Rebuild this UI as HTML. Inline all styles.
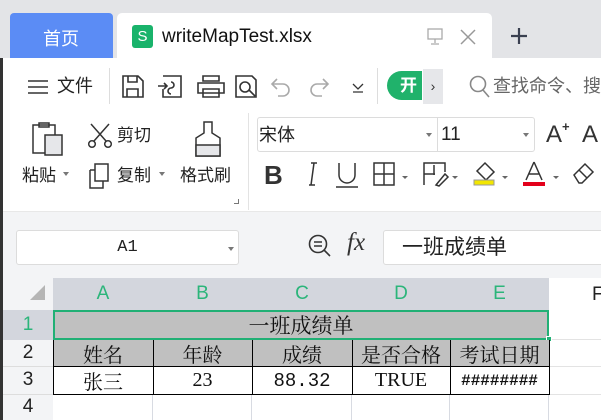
<!DOCTYPE html>
<html><head><meta charset="utf-8"><style>
*{margin:0;padding:0;box-sizing:border-box}
body{width:601px;height:420px;overflow:hidden;position:relative;background:#fff;font-family:"Liberation Sans","Noto Sans CJK SC",sans-serif;color:#222}
.a{position:absolute}
.t{white-space:nowrap;line-height:1}
.cell{position:absolute;display:flex;align-items:center;justify-content:center;font-family:"Liberation Serif","Noto Serif CJK SC","Noto Sans CJK SC",serif;font-size:20px;color:#111;white-space:nowrap}
.ch{position:absolute;top:278px;height:32px;display:flex;align-items:center;justify-content:center;color:#2bb57a;font-size:19px}
.rh{position:absolute;left:3px;width:50px;display:flex;align-items:center;justify-content:center;font-size:19px;color:#222}
.car{position:absolute;border:3px solid transparent;border-top:4px solid #777}
</style></head><body>
<div class="a" style="left:0;top:0;width:601px;height:58px;background:#e3e4e7"></div>
<div class="a" style="left:10px;top:13px;width:103px;height:45px;background:#5b8cf5;border-radius:4px 4px 0 0"></div>
<div class="a t" style="left:43px;top:30px;color:#fff;font-size:18px">首页</div>
<div class="a" style="left:117px;top:13px;width:375px;height:46px;background:#fff;border-radius:5px 5px 0 0"></div>
<div class="a" style="left:132px;top:25px;width:21px;height:23px;background:#19b36b;border-radius:3px;color:#fff;font-size:15px;text-align:center;line-height:23px">S</div>
<div class="a t" style="left:162px;top:27px;font-size:19px;color:#111">writeMapTest.xlsx</div>
<svg class="a" style="left:426px;top:28px" width="20" height="18"><rect x="2" y="1" width="14" height="10" fill="none" stroke="#aaa" stroke-width="1.3"/><path d="M9 11v4M5 16h8" stroke="#aaa" stroke-width="1.3"/></svg>
<svg class="a" style="left:459px;top:28px" width="18" height="18"><path d="M2 2L16 16M16 2L2 16" stroke="#999" stroke-width="1.5"/></svg>
<svg class="a" style="left:509px;top:26px" width="20" height="20"><path d="M10 2v16M2 10h16" stroke="#3a4050" stroke-width="2.2"/></svg>
<div class="a" style="left:0;top:58px;width:3px;height:362px;background:#333"></div>
<!-- row1 toolbar -->
<svg class="a" style="left:27px;top:79px" width="22" height="16"><path d="M1 2h20M1 8h20M1 14h20" stroke="#333" stroke-width="1.4"/></svg>
<div class="a t" style="left:57px;top:77px;font-size:18px">文件</div>
<div class="a" style="left:109px;top:68px;width:1px;height:36px;background:#ddd"></div>
<svg class="a" style="left:120px;top:73px" width="250" height="28" fill="none" stroke="#333" stroke-width="1.6">
<path d="M3 3h15l5 5v16H3z M8 3v6h9V3 M7 24v-8h11v8"/>
<path d="M43 3h18v21H43v-8 M38 13h9 M44 10l3 3-3 3 M51 9a3 3 0 1 1 0 6a3 3 0 1 0 0 6"/>
<path d="M83 8h16v-5H83z M78 10h26v10H78z M83 16h16v8H83z"/>
<path d="M116 3h16l4 4v17h-20z M125 9a5 5 0 1 1 0 10a5 5 0 1 1 0-10 M129 17l6 6"/>
<path d="M157 6l-5 5 5 5 M152 11h11a6 6 0 0 1 0 12h-5" stroke="#aaa"/>
<path d="M203 6l5 5-5 5 M208 11h-11a6 6 0 0 0 0 12h5" stroke="#aaa"/>
<path d="M233 11l5 5 5-5 M233 19h10" stroke-width="1.3"/>
</svg>
<div class="a" style="left:377px;top:68px;width:1px;height:36px;background:#ddd"></div>
<div class="a" style="left:387px;top:71px;width:35px;height:29px;background:#20b26b;border-radius:15px 0 0 15px;color:#fff;font-weight:bold;font-size:17px;line-height:29px;padding-left:13px">开</div>
<div class="a" style="left:423px;top:69px;width:20px;height:35px;background:#e6e7ea;font-size:14px;text-align:center;line-height:34px;color:#333">›</div>
<svg class="a" style="left:469px;top:75px" width="22" height="24"><circle cx="9" cy="9" r="7.5" fill="none" stroke="#888" stroke-width="1.6"/><path d="M14 15l6 7" stroke="#888" stroke-width="1.6"/></svg>
<div class="a t" style="left:493px;top:77px;font-size:18px;color:#666">查找命令、搜</div>
<!-- clipboard group -->
<svg class="a" style="left:31px;top:121px" width="34" height="36" fill="none" stroke="#333" stroke-width="1.5"><path d="M2 4h22v28H2z M8 2h10v4H8z"/><rect x="14" y="14" width="17" height="20" fill="#e6e7ea"/></svg>
<div class="a t" style="left:22px;top:167px;font-size:17px">粘贴</div><div class="car" style="left:63px;top:172px"></div>
<svg class="a" style="left:87px;top:122px" width="26" height="28" fill="none" stroke="#333" stroke-width="1.5"><path d="M4 2l15 17M22 2L7 19"/><circle cx="5" cy="22" r="3.3"/><circle cx="21" cy="22" r="3.3"/></svg>
<div class="a t" style="left:117px;top:127px;font-size:17px">剪切</div>
<svg class="a" style="left:87px;top:162px" width="24" height="28" fill="none" stroke="#333" stroke-width="1.5"><path d="M8 2h13v17H8z M3 8h5 M3 8v18h13v-7"/></svg>
<div class="a t" style="left:117px;top:167px;font-size:17px">复制</div><div class="car" style="left:159px;top:172px"></div>
<svg class="a" style="left:193px;top:120px" width="30" height="38" fill="none" stroke="#333" stroke-width="1.5"><path d="M11 2h8v11l8 5v18H3V18l8-5z"/><rect x="3" y="25" width="24" height="11" fill="#e6e7ea"/></svg>
<div class="a t" style="left:180px;top:167px;font-size:17px">格式刷</div>
<div class="a" style="left:234px;top:199px;width:5px;height:5px;border-right:1px solid #777;border-bottom:1px solid #777"></div>
<div class="a" style="left:248px;top:113px;width:1px;height:97px;background:#e3e3e3"></div>
<!-- font -->
<div class="a" style="left:257px;top:117px;width:278px;height:35px;border:1px solid #dcdcdc;border-radius:3px"></div>
<div class="a" style="left:437px;top:117px;width:1px;height:35px;background:#dcdcdc"></div>
<div class="a t" style="left:259px;top:126px;font-size:18px">宋体</div>
<div class="car" style="left:426px;top:133px"></div>
<div class="a t" style="left:441px;top:125px;font-size:19px">11</div>
<div class="car" style="left:523px;top:133px"></div>
<div class="a t" style="left:546px;top:123px;font-size:24px;color:#333">A</div>
<div class="a t" style="left:562px;top:120px;font-size:13px;color:#333;font-weight:bold">+</div>
<div class="a t" style="left:582px;top:123px;font-size:24px;color:#333">A</div>
<div class="a t" style="left:264px;top:162px;font-size:26px;font-weight:bold;color:#333">B</div>
<svg class="a" style="left:260px;top:158px" width="341" height="34" fill="none" stroke="#333" stroke-width="1.5">
<path d="M51 5h6 M49 27h6 M54 5l-3 22"/>
<path d="M79 5v12a8 8 0 0 0 16 0V5 M76 29h22"/>
<path d="M114 5h20v22H114z M124 5v22 M114 16h20"/>
<path d="M148 18l-3 3-3-3z" fill="#666" stroke="none"/>
<path d="M164 27V5h21v9 M164 16h11 M174 7v10 M176 27l9-11 3 3-9 9z" stroke-dasharray="0"/>
<path d="M198 18l-3 3-3-3z" fill="#666" stroke="none"/>
<path d="M217 13l8-8 9 9-8 8z"/><rect x="214" y="22" width="20" height="5" fill="#f2e600" stroke="#999" stroke-width="1"/>
<path d="M248 18l-3 3-3-3z" fill="#666" stroke="none"/>
<path d="M274 4l-8 18M274 4l8 18M269 16h10"/><rect x="263" y="24" width="22" height="4" fill="#e3001b" stroke="none"/>
<path d="M299 18l-3 3-3-3z" fill="#666" stroke="none"/>
<path d="M314 17l11-11 8 8-11 11h-3z M319 12l8 8"/>
</svg>
<!-- grey area -->
<div class="a" style="left:3px;top:211px;width:598px;height:67px;background:#f3f4f6;border-top:1px solid #e8e8e8"></div>
<div class="a" style="left:16px;top:230px;width:223px;height:35px;background:#fff;border:1px solid #dcdcdc;border-radius:3px;font-family:'Liberation Mono',monospace;font-size:17px;text-align:center;line-height:33px">A1</div>
<div class="car" style="left:228px;top:247px"></div>
<svg class="a" style="left:307px;top:233px" width="26" height="26" fill="none" stroke="#333" stroke-width="1.6"><circle cx="11" cy="11" r="8.5"/><path d="M7 9h8M7 13h8M17 17l6 6"/></svg>
<div class="a" style="left:347px;top:229px;font-family:'Liberation Serif',serif;font-style:italic;font-size:25px;color:#333">fx</div>
<div class="a" style="left:383px;top:230px;width:230px;height:35px;background:#fff;border:1px solid #dcdcdc;border-radius:3px;font-size:21px;padding-left:18px;line-height:33px">一班成绩单</div>
<!-- grid -->
<div class="a" style="left:3px;top:278px;width:50px;height:142px;background:#f3f4f6"></div>
<div class="a" style="left:3px;top:310px;width:50px;height:30px;background:#d3d6dd"></div>
<svg class="a" style="left:30px;top:285px" width="16" height="16"><path d="M15 0V15H0z" fill="#b5b5b5"/></svg>
<div class="a" style="left:53px;top:278px;width:496px;height:32px;background:#d3d6dd"></div>
<div class="ch" style="left:53px;width:100px">A</div>
<div class="ch" style="left:153px;width:99px">B</div>
<div class="ch" style="left:252px;width:100px">C</div>
<div class="ch" style="left:352px;width:98px">D</div>
<div class="ch" style="left:450px;width:99px">E</div>
<div class="a" style="left:592px;top:284px;font-size:19px">F</div>
<div class="rh" style="top:310px;height:30px;color:#2bb57a">1</div>
<div class="rh" style="top:340px;height:26px">2</div>
<div class="rh" style="top:366px;height:28px">3</div>
<div class="rh" style="top:394px;height:26px">4</div>
<div class="a" style="left:53px;top:394px;width:548px;height:26px;background:linear-gradient(90deg,transparent 99px,#d8dbe2 99px,#d8dbe2 100px,transparent 100px,transparent 198px,#d8dbe2 198px,#d8dbe2 199px,transparent 199px,transparent 298px,#d8dbe2 298px,#d8dbe2 299px,transparent 299px,transparent 396px,#d8dbe2 396px,#d8dbe2 397px,transparent 397px,transparent 495px,#d8dbe2 495px,#d8dbe2 496px,transparent 496px)"></div>
<div class="a" style="left:3px;top:366px;width:50px;height:1px;background:#ddd"></div>
<div class="a" style="left:3px;top:394px;width:50px;height:1px;background:#ddd"></div>
<div class="a" style="left:549px;top:339px;width:52px;height:1px;background:#e3e3e3"></div>
<div class="a" style="left:549px;top:366px;width:52px;height:1px;background:#e3e3e3"></div>
<div class="a" style="left:549px;top:394px;width:52px;height:1px;background:#e3e3e3"></div>
<div class="cell" style="left:53px;top:310px;width:496px;height:30px;background:#c0c0c0;border:2px solid #21b075;font-size:21px">一班成绩单</div>
<div class="a" style="left:546px;top:336px;width:6px;height:6px;background:#21b075;border:1px solid #fff"></div>
<div class="a" style="left:53px;top:340px;width:496px;height:26px;background:#c0c0c0"></div>
<div class="a" style="left:53px;top:340px;width:497px;height:55px;border-left:1px solid #000;border-right:1px solid #000;border-bottom:1px solid #000"></div>
<div class="a" style="left:53px;top:366px;width:497px;height:1px;background:#000"></div>
<div class="a" style="left:153px;top:340px;width:1px;height:55px;background:#000"></div>
<div class="a" style="left:252px;top:340px;width:1px;height:55px;background:#000"></div>
<div class="a" style="left:352px;top:340px;width:1px;height:55px;background:#000"></div>
<div class="a" style="left:450px;top:340px;width:1px;height:55px;background:#000"></div>
<div class="cell" style="left:53px;top:340px;width:100px;height:27px">姓名</div>
<div class="cell" style="left:153px;top:340px;width:99px;height:27px">年龄</div>
<div class="cell" style="left:252px;top:340px;width:100px;height:27px">成绩</div>
<div class="cell" style="left:352px;top:340px;width:98px;height:27px">是否合格</div>
<div class="cell" style="left:450px;top:340px;width:99px;height:27px">考试日期</div>
<div class="cell" style="left:53px;top:367px;width:100px;height:27px">张三</div>
<div class="cell" style="left:153px;top:367px;width:99px;height:27px">23</div>
<div class="cell" style="left:252px;top:367px;width:100px;height:27px;font-family:'Liberation Mono',monospace;font-size:19px">88.32</div>
<div class="cell" style="left:352px;top:367px;width:98px;height:27px">TRUE</div>
<div class="cell" style="left:450px;top:367px;width:99px;height:27px;font-family:'Liberation Mono',monospace;font-size:16px;font-weight:bold">########</div>
</body></html>
